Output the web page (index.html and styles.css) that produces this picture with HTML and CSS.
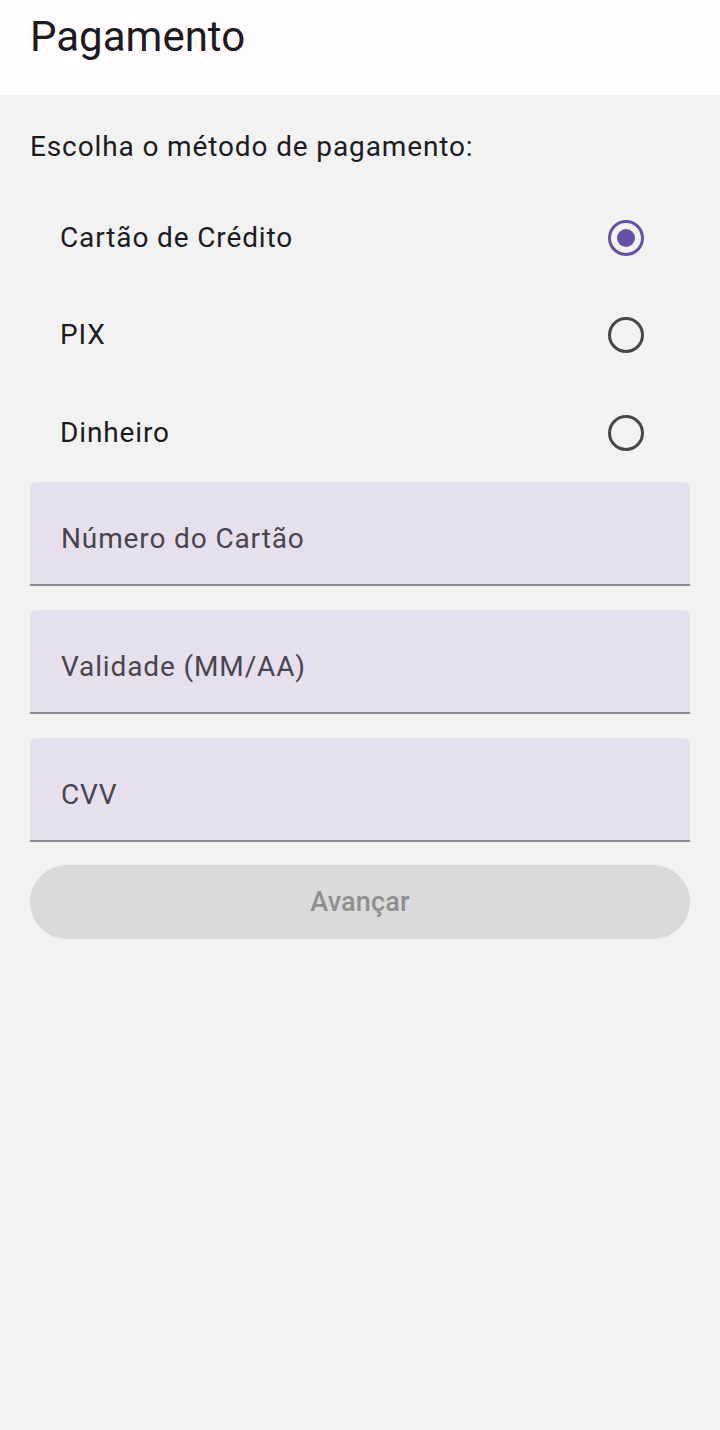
FILE: index.html
```html
<!DOCTYPE html>
<html lang="pt">
<head>
<meta charset="utf-8">
<title>Pagamento</title>
<link rel="stylesheet" href="styles.css">
</head>
<body>
<header class="topbar">
  <h1 class="title">Pagamento</h1>
</header>
<main class="content">
  <p class="prompt">Escolha o método de pagamento:</p>
  <div class="options">
    <label class="option">
      <span class="option-label">Cartão de Crédito</span>
      <span class="radio selected"><span class="dot"></span></span>
    </label>
    <label class="option">
      <span class="option-label">PIX</span>
      <span class="radio"></span>
    </label>
    <label class="option">
      <span class="option-label">Dinheiro</span>
      <span class="radio"></span>
    </label>
  </div>
  <div class="fields">
    <div class="field"><span class="field-label">Número do Cartão</span></div>
    <div class="field"><span class="field-label">Validade (MM/AA)</span></div>
    <div class="field"><span class="field-label">CVV</span></div>
  </div>
  <button class="next" type="button" disabled>Avançar</button>
</main>
</body>
</html>
```

FILE: styles.css
```css
* { box-sizing: border-box; }
html, body {
  margin: 0;
  padding: 0;
}
body {
  width: 720px;
  min-height: 1430px;
  background: #f2f2f2;
  font-family: Roboto, "Noto Sans", sans-serif;
  color: #1c1b1f;
}
.topbar {
  height: 95px;
  background: #fffbfe;
  padding: 0 30px;
  display: flex;
  align-items: flex-start;
}
.title {
  margin: 0;
  font-size: 42px;
  font-weight: 400;
  line-height: 56px;
  padding-top: 9px;
  letter-spacing: 0;
}
.content {
  padding: 0 30px;
  display: flex;
  flex-direction: column;
}
.prompt {
  margin: 0;
  padding-top: 32px;
  font-size: 28px;
  line-height: 40px;
  letter-spacing: 0.875px;
  height: 94px;
}
.options {
  display: flex;
  flex-direction: column;
}
.option {
  height: 97.5px;
  display: flex;
  align-items: center;
  justify-content: space-between;
  padding-left: 30px;
  padding-right: 46px;
}
.option-label {
  font-size: 28px;
  line-height: 36px;
  letter-spacing: 0.875px;
}
.radio {
  width: 36px;
  height: 36px;
  border-radius: 50%;
  border: 3.5px solid #49454f;
  display: flex;
  align-items: center;
  justify-content: center;
}
.radio.selected {
  border-color: #6750a4;
}
.dot {
  width: 18px;
  height: 18px;
  border-radius: 50%;
  background: #6750a4;
}
.fields {
  display: flex;
  flex-direction: column;
  gap: 24px;
}
.field {
  height: 104px;
  background: #e7e0ec;
  border-radius: 6px 6px 0 0;
  border-bottom: 2px solid #8e8a94;
  display: flex;
  align-items: center;
  padding: 12px 31px 0;
}
.field-label {
  font-size: 28px;
  color: #49454f;
  line-height: 36px;
  letter-spacing: 0.875px;
}
.next {
  margin-top: 23px;
  height: 74px;
  border: none;
  border-radius: 37px;
  background: #dadada;
  color: #8f8f8f;
  font-family: Roboto, "Noto Sans", sans-serif;
  font-size: 27px;
  font-weight: 500;
  letter-spacing: 0.2px;
  padding: 0;
}
```
